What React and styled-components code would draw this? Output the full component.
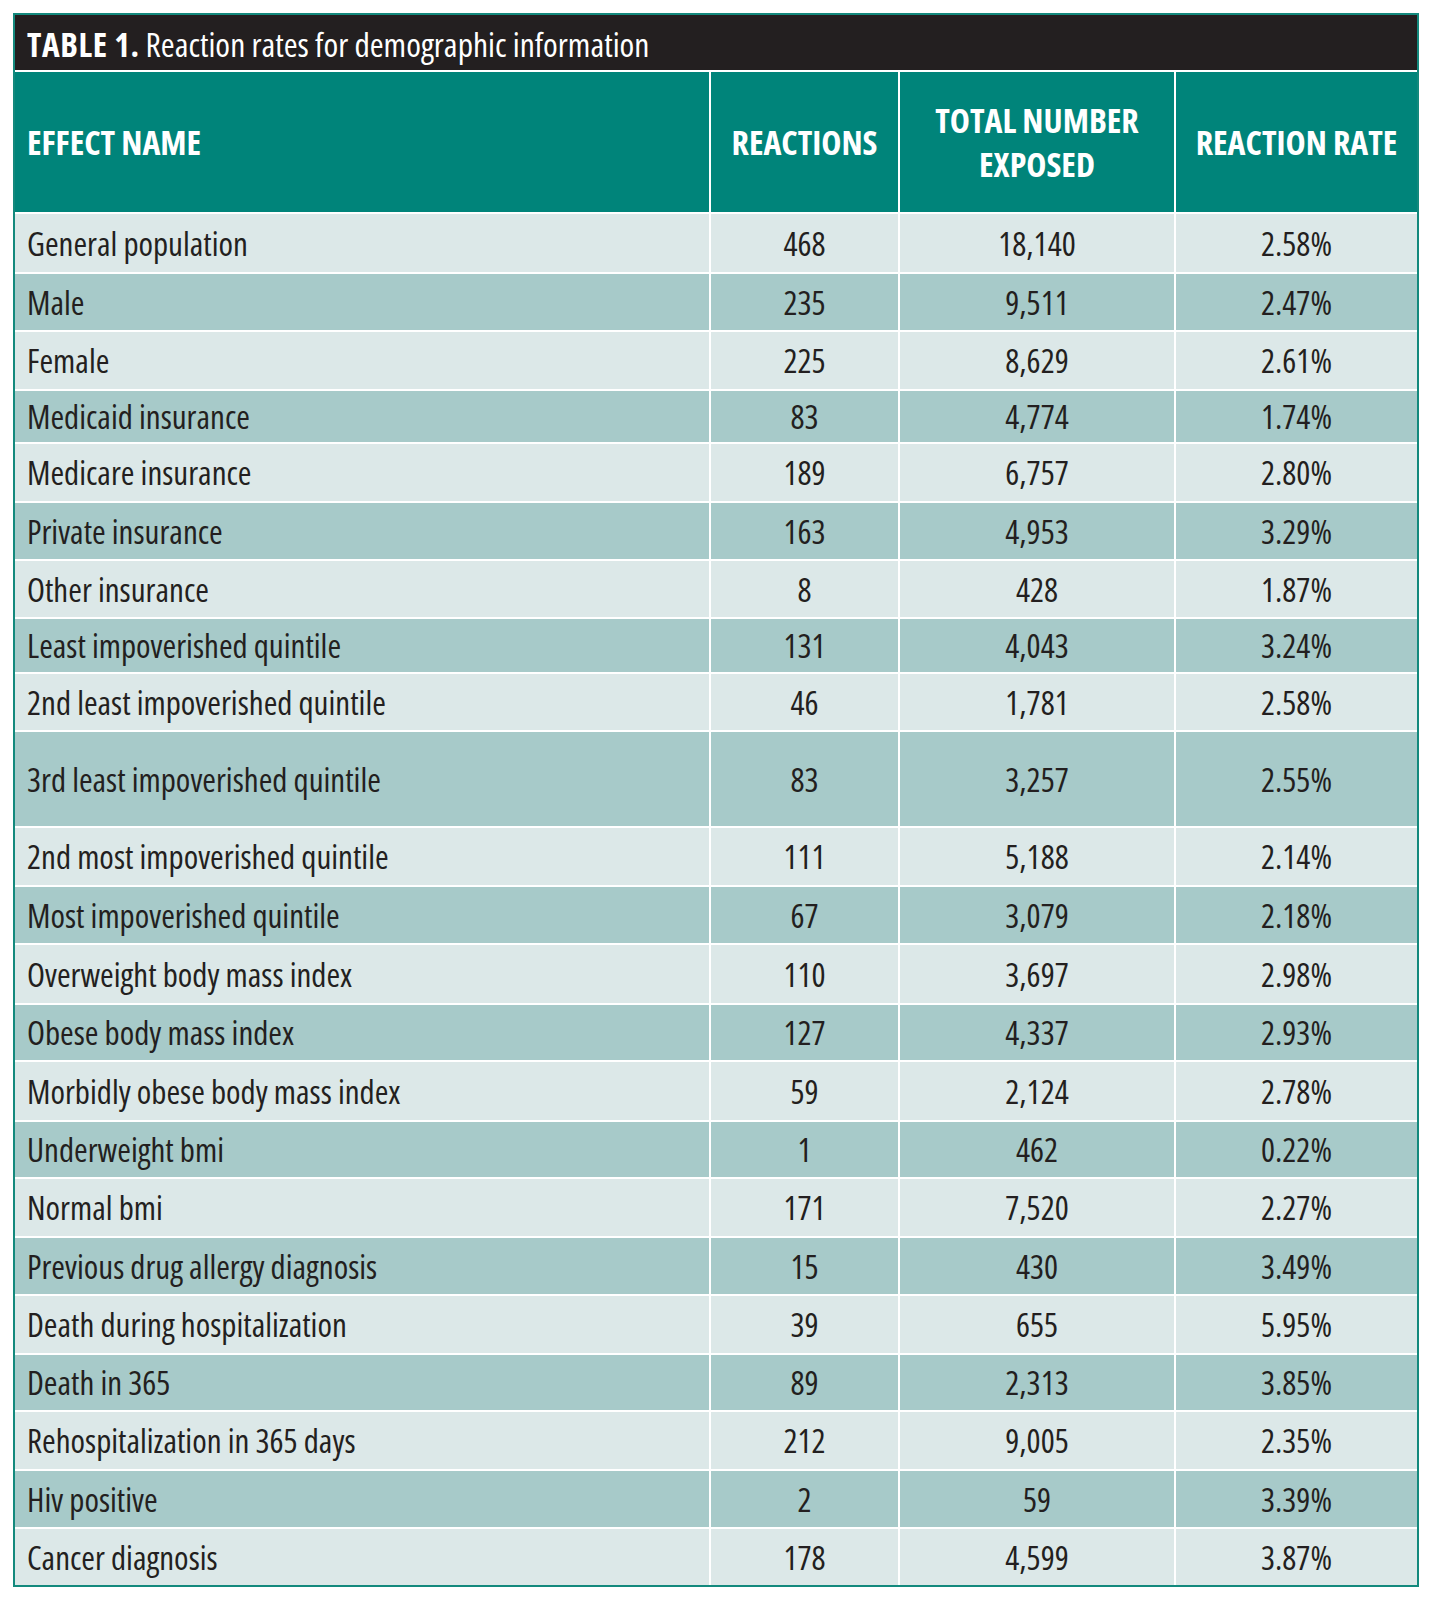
import React from 'react';
import styled, { createGlobalStyle } from 'styled-components';

const GlobalStyle = createGlobalStyle`
  html, body {
    margin: 0;
    padding: 0;
    background: #ffffff;
  }
  body {
    font-family: "Open Sans", "Roboto Condensed", sans-serif;
    font-stretch: 75%;
    color: #231f20;
  }
`;

const Page = styled.div`
  padding: 13px 0 20px 13px;
`;

const Frame = styled.div`
  width: 1406px;
  box-sizing: border-box;
  border: 2px solid #13897d;
  background: #ffffff;
`;

const TitleBar = styled.div`
  height: 55px;
  background: #231f20;
  color: #ffffff;
  display: flex;
  align-items: center;
  padding-left: 12px;
  padding-top: 2px;
  box-sizing: border-box;
  font-size: 33.5px;
  white-space: nowrap;
`;

const TitleStrong = styled.span`
  font-weight: 700;
  letter-spacing: 0.6px;
  margin-right: 6px;
`;

const Row = styled.div`
  display: grid;
  grid-template-columns: 694px 187px 274px 241px;
  column-gap: 2px;
  padding-top: 2px;
  height: ${p => p.h}px;
  box-sizing: border-box;
  background: #ffffff;
`;

const HeadCell = styled.div`
  background: #00847a;
  color: #ffffff;
  font-weight: 700;
  font-size: 34px;
  line-height: 44px;
  display: flex;
  align-items: center;
  justify-content: ${p => (p.left ? 'flex-start' : 'center')};
  text-align: ${p => (p.left ? 'left' : 'center')};
  padding-left: ${p => (p.left ? '12px' : '0')};
  box-sizing: border-box;
  white-space: nowrap;
`;

const Cell = styled.div`
  background: ${p => (p.dark ? '#a7cac9' : '#dce8e8')};
  font-size: 33px;
  display: flex;
  align-items: center;
  justify-content: ${p => (p.left ? 'flex-start' : 'center')};
  padding-left: ${p => (p.left ? '12px' : '0')};
  box-sizing: border-box;
  white-space: nowrap;
`;

const rows = [
  ['General population', '468', '18,140', '2.58%', 60],
  ['Male', '235', '9,511', '2.47%', 58],
  ['Female', '225', '8,629', '2.61%', 59],
  ['Medicaid insurance', '83', '4,774', '1.74%', 53],
  ['Medicare insurance', '189', '6,757', '2.80%', 59],
  ['Private insurance', '163', '4,953', '3.29%', 58],
  ['Other insurance', '8', '428', '1.87%', 58],
  ['Least impoverished quintile', '131', '4,043', '3.24%', 55],
  ['2nd least impoverished quintile', '46', '1,781', '2.58%', 58],
  ['3rd least impoverished quintile', '83', '3,257', '2.55%', 96],
  ['2nd most impoverished quintile', '111', '5,188', '2.14%', 59],
  ['Most impoverished quintile', '67', '3,079', '2.18%', 58],
  ['Overweight body mass index', '110', '3,697', '2.98%', 60],
  ['Obese body mass index', '127', '4,337', '2.93%', 57],
  ['Morbidly obese body mass index', '59', '2,124', '2.78%', 60],
  ['Underweight bmi', '1', '462', '0.22%', 57],
  ['Normal bmi', '171', '7,520', '2.27%', 59],
  ['Previous drug allergy diagnosis', '15', '430', '3.49%', 58],
  ['Death during hospitalization', '39', '655', '5.95%', 59],
  ['Death in 365', '89', '2,313', '3.85%', 57],
  ['Rehospitalization in 365 days', '212', '9,005', '2.35%', 59],
  ['Hiv positive', '2', '59', '3.39%', 58],
  ['Cancer diagnosis', '178', '4,599', '3.87%', 58],
];

export default function App() {
  return (
    <Page>
      <GlobalStyle />
      <Frame>
        <TitleBar>
          <TitleStrong>TABLE 1.</TitleStrong>
          Reaction rates for demographic information
        </TitleBar>
        <Row h={142}>
          <HeadCell left>EFFECT NAME</HeadCell>
          <HeadCell>REACTIONS</HeadCell>
          <HeadCell>TOTAL NUMBER<br />EXPOSED</HeadCell>
          <HeadCell>REACTION RATE</HeadCell>
        </Row>
        {rows.map((r, i) => (
          <Row key={r[0]} h={r[4]}>
            <Cell left dark={i % 2 === 1}>{r[0]}</Cell>
            <Cell dark={i % 2 === 1}>{r[1]}</Cell>
            <Cell dark={i % 2 === 1}>{r[2]}</Cell>
            <Cell dark={i % 2 === 1}>{r[3]}</Cell>
          </Row>
        ))}
      </Frame>
    </Page>
  );
}
